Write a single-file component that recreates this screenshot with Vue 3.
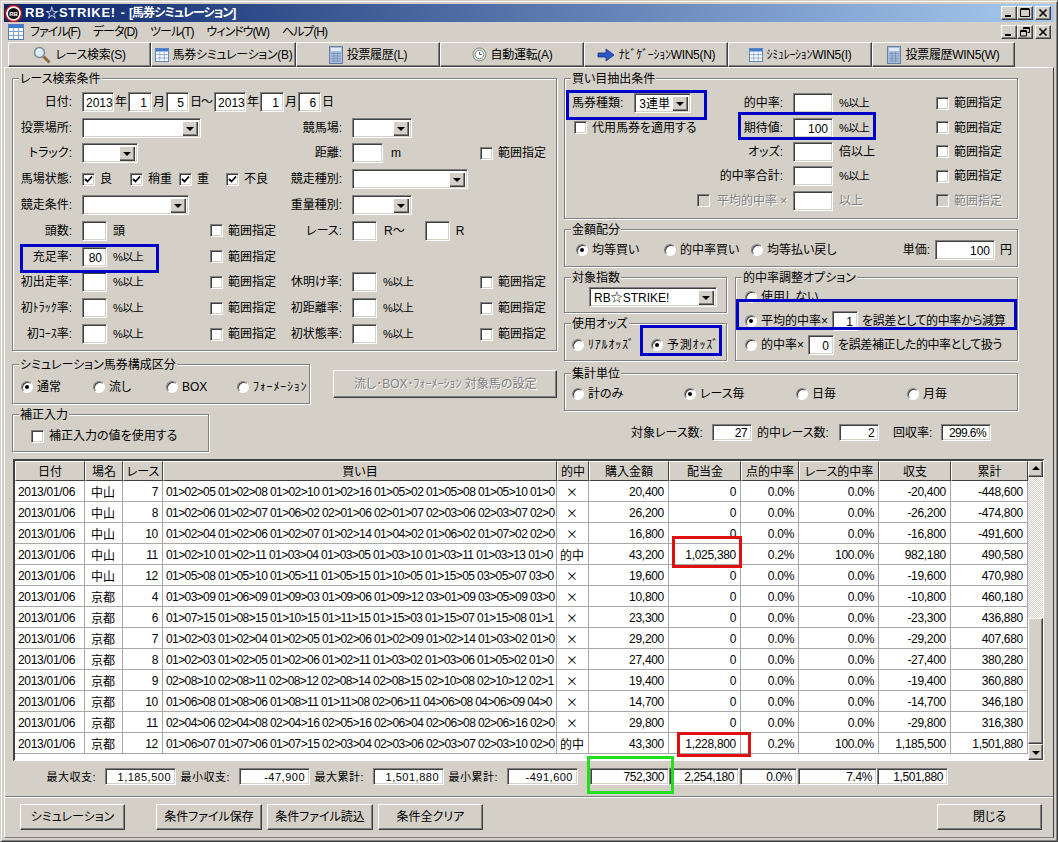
<script setup>
const tabs = [
  { icon: 'search', text: 'レース検索(S)', cls: 'w143' },
  { icon: 'grid', text: '馬券シミュレーション(B)', cls: 'w145' },
  { icon: 'sheet', text: '投票履歴(L)', cls: 'w144' },
  { icon: 'clock', text: '自動運転(A)', cls: 'w144' },
  { icon: 'arrow', text: 'ﾅﾋﾞｹﾞｰｼｮﾝWIN5(N)', cls: 'w144' },
  { icon: 'grid', text: 'ｼﾐｭﾚｰｼｮﾝWIN5(I)', cls: 'w144' },
  { icon: 'sheet', text: '投票履歴WIN5(W)', cls: 'w143' }
]
const menus = ['ファイル(F)', 'データ(D)', 'ツール(T)', 'ウィンドウ(W)', 'ヘルプ(H)']
const rateRows = [
  ['初出走率:', '休明け率:'],
  ['初ﾄﾗｯｸ率:', '初距離率:'],
  ['初ｺｰｽ率:', '初状態率:']
]
const cols = [
  { name: '日付', cls: 'c-date' }, { name: '場名', cls: 'c-place' }, { name: 'レース', cls: 'c-race' },
  { name: '買い目', cls: 'c-buy' }, { name: '的中', cls: 'c-hit' }, { name: '購入金額', cls: 'c-n80' },
  { name: '配当金', cls: 'c-n72' }, { name: '点的中率', cls: 'c-n58' }, { name: 'レース的中率', cls: 'c-n80' },
  { name: '収支', cls: 'c-n72' }, { name: '累計', cls: 'c-n77' }
]
const rows = [
  ['中山', 7, '01>02>05 01>02>08 01>02>10 01>02>16 01>05>02 01>05>08 01>05>10 01>0', '×', '20,400', '0', '0.0%', '0.0%', '-20,400', '-448,600'],
  ['中山', 8, '01>02>06 01>02>07 01>06>02 02>01>06 02>01>07 02>03>06 02>03>07 02>0', '×', '26,200', '0', '0.0%', '0.0%', '-26,200', '-474,800'],
  ['中山', 10, '01>02>04 01>02>06 01>02>07 01>02>14 01>04>02 01>06>02 01>07>02 02>0', '×', '16,800', '0', '0.0%', '0.0%', '-16,800', '-491,600'],
  ['中山', 11, '01>02>10 01>02>11 01>03>04 01>03>05 01>03>10 01>03>11 01>03>13 01>0', '的中', '43,200', '1,025,380', '0.2%', '100.0%', '982,180', '490,580'],
  ['中山', 12, '01>05>08 01>05>10 01>05>11 01>05>15 01>10>05 01>15>05 03>05>07 03>0', '×', '19,600', '0', '0.0%', '0.0%', '-19,600', '470,980'],
  ['京都', 4, '01>03>09 01>06>09 01>09>03 01>09>06 01>09>12 03>01>09 03>05>09 03>0', '×', '10,800', '0', '0.0%', '0.0%', '-10,800', '460,180'],
  ['京都', 6, '01>07>15 01>08>15 01>10>15 01>11>15 01>15>03 01>15>07 01>15>08 01>1', '×', '23,300', '0', '0.0%', '0.0%', '-23,300', '436,880'],
  ['京都', 7, '01>02>03 01>02>04 01>02>05 01>02>06 01>02>09 01>02>14 01>03>02 01>0', '×', '29,200', '0', '0.0%', '0.0%', '-29,200', '407,680'],
  ['京都', 8, '01>02>03 01>02>05 01>02>06 01>02>11 01>03>02 01>03>06 01>05>02 01>0', '×', '27,400', '0', '0.0%', '0.0%', '-27,400', '380,280'],
  ['京都', 9, '02>08>10 02>08>11 02>08>12 02>08>14 02>08>15 02>10>08 02>10>12 02>1', '×', '19,400', '0', '0.0%', '0.0%', '-19,400', '360,880'],
  ['京都', 10, '01>06>08 01>08>06 01>08>11 01>11>08 02>06>11 04>06>08 04>06>09 04>0', '×', '14,700', '0', '0.0%', '0.0%', '-14,700', '346,180'],
  ['京都', 11, '02>04>06 02>04>08 02>04>16 02>05>16 02>06>04 02>06>08 02>06>16 02>0', '×', '29,800', '0', '0.0%', '0.0%', '-29,800', '316,380'],
  ['京都', 12, '01>06>07 01>07>06 01>07>15 02>03>04 02>03>06 02>03>07 02>03>10 02>0', '的中', '43,300', '1,228,800', '0.2%', '100.0%', '1,185,500', '1,501,880']
]
const buyRows = [
  { label: '的中率:', val: '', suf: '%以上', cls: 'pct' },
  { label: '期待値:', val: '100', suf: '%以上', cls: 'pct' },
  { label: 'オッズ:', val: '', suf: '倍以上', cls: '' },
  { label: '的中率合計:', val: '', suf: '%以上', cls: 'pct' }
]
const summary = [
  ['最大収支:', '1,185,500'], ['最小収支:', '-47,900'], ['最大累計:', '1,501,880'], ['最小累計:', '-491,600']
]
</script>

<template>
  <div class="app">
    <svg class="defs" width="0" height="0">
      <defs>
        <symbol id="i-grid" viewBox="0 0 16 16">
          <rect x="0.5" y="0.5" width="15" height="15" fill="#fff" stroke="#4f7cc0" />
          <rect x="1" y="1" width="14" height="3" fill="#3f78d0" />
          <path d="M1 7.5h14M1 11.5h14M5.5 4v11M10.5 4v11" stroke="#7fa3d8" fill="none" />
        </symbol>
        <symbol id="i-search" viewBox="0 0 18 18">
          <path d="M10.5 10.5l6 6" stroke="#8a6a3a" stroke-width="3" fill="none" />
          <circle cx="6.5" cy="6.5" r="5" fill="#d8ecfa" stroke="#7a8a9a" stroke-width="1.5" />
          <path d="M4 6a3 3 0 0 1 3-2.5" stroke="#fff" fill="none" />
        </symbol>
        <symbol id="i-sheet" viewBox="0 0 14 18">
          <rect x="0.5" y="0.5" width="13" height="17" fill="#a8bcdc" stroke="#6a7f9f" />
          <rect x="2" y="2" width="10" height="3" fill="#dfe8f5" />
          <path d="M2.5 7.5h9M2.5 10h9M2.5 12.5h9M2.5 15h9M5 6.5v10M8.5 6.5v10" stroke="#5f78a8" stroke-dasharray="1 1" fill="none" />
        </symbol>
        <symbol id="i-clock" viewBox="0 0 16 16">
          <circle cx="8" cy="8" r="7" fill="#d8d8c8" stroke="#8a8a80" />
          <circle cx="8" cy="8" r="4.5" fill="#fff" stroke="#6f8fb8" />
          <path d="M8 5v3h2.5" stroke="#555" fill="none" />
        </symbol>
        <symbol id="i-arrow" viewBox="0 0 18 14">
          <path d="M1 5h8V1l8 6-8 6V9H1z" fill="#2a55c8" stroke="#16307f" stroke-width="0.8" />
        </symbol>
      </defs>
    </svg>

    <div class="window">
      <header class="title">
        <svg class="logo" width="17" height="17" viewBox="0 0 17 17">
          <circle cx="8.5" cy="8.5" r="8" fill="#fff" stroke="#c01010" stroke-width="1.5" />
          <circle cx="8.5" cy="8.5" r="5.6" fill="#111" />
          <text x="8.5" y="10.5" text-anchor="middle" font-size="6" font-weight="700" fill="#fff" font-family="Liberation Sans">RB</text>
        </svg>
        <span class="title-a">RB☆STRIKE!</span><span class="title-b">- [馬券シミュレーション]</span>
        <div class="wbtns">
          <span class="wb"><svg width="14" height="12"><rect x="3" y="8" width="6" height="2" fill="#000" /></svg></span>
          <span class="wb"><svg width="14" height="12"><path d="M2.5 2.5h9v7h-9z M2.5 1.5h9" fill="none" stroke="#000" /></svg></span>
          <span class="wb wb-gap"><svg width="14" height="12"><path d="M3.5 2.5l7 7M10.5 2.5l-7 7" stroke="#000" stroke-width="1.6" /></svg></span>
        </div>
      </header>

      <nav class="menu">
        <svg class="menu-icon" width="16" height="16"><use href="#i-grid" /></svg>
        <span v-for="m in menus" :key="m" class="menu-item">{{ m }}</span>
        <div class="wbtns">
          <span class="wb"><svg width="14" height="12"><rect x="3" y="8" width="6" height="2" fill="#000" /></svg></span>
          <span class="wb"><svg width="14" height="12"><path d="M5.5 3.5v-2h6v5h-2M5.5 2.5h6M2.5 4.5h6v5.500h-6zM2.500 5.500h6" fill="none" stroke="#000" /></svg></span>
          <span class="wb wb-gap"><svg width="14" height="12"><path d="M3.500 2.500l7 7M10.500 2.500l-7 7" stroke="#000" stroke-width="1.600" /></svg></span>
        </div>
      </nav>

      <div class="tabs">
        <div v-for="t in tabs" :key="t.text" class="tab raised" :class="t.cls">
          <svg v-if="t.icon === 'search'" width="18" height="18"><use href="#i-search" /></svg>
          <svg v-else-if="t.icon === 'grid'" width="14" height="14"><use href="#i-grid" /></svg>
          <svg v-else-if="t.icon === 'sheet'" width="14" height="18"><use href="#i-sheet" /></svg>
          <svg v-else-if="t.icon === 'clock'" width="15" height="15"><use href="#i-clock" /></svg>
          <svg v-else width="18" height="14"><use href="#i-arrow" /></svg>
          <span>{{ t.text }}</span>
        </div>
      </div>

      <main class="child">
        <div class="top">
          <div class="col-left">
            <section class="group g-race">
              <span class="legend">レース検索条件</span>
              <div class="race-grid">
                <span class="lab">日付:</span>
                <div class="span5 date">
                  <span class="tb w32 r">2013</span><span class="u">年</span>
                  <span class="tb w24 r">1</span><span class="u">月</span>
                  <span class="tb w23 r">5</span><span class="u wave">日～</span>
                  <span class="tb w32 r">2013</span><span class="u">年</span>
                  <span class="tb w24 r">1</span><span class="u">月</span>
                  <span class="tb w23 r">6</span><span class="u">日</span>
                </div>

                <span class="lab">投票場所:</span>
                <span class="cb w119"><i class="drop"></i></span><span></span>
                <span class="lab">競馬場:</span>
                <span class="cb w60"><i class="drop"></i></span><span></span>

                <span class="lab">トラック:</span>
                <span class="cb w56"><i class="drop"></i></span><span></span>
                <span class="lab">距離:</span>
                <div class="f"><span class="tb w31"></span><span class="m">m</span></div>
                <label class="chk"><i class="box"></i>範囲指定</label>

                <span class="lab">馬場状態:</span>
                <div class="span2 baba">
                  <label class="chk w48"><i class="box on"><svg width="9" height="9" viewBox="0 0 9 9"><path d="M1 4l2.500 2.500L8 1.500" fill="none" stroke="#000" stroke-width="1.800" /></svg></i>良</label>
                  <label class="chk w49"><i class="box on"><svg width="9" height="9" viewBox="0 0 9 9"><path d="M1 4l2.500 2.500L8 1.500" fill="none" stroke="#000" stroke-width="1.800" /></svg></i>稍重</label>
                  <label class="chk w47"><i class="box on"><svg width="9" height="9" viewBox="0 0 9 9"><path d="M1 4l2.500 2.500L8 1.500" fill="none" stroke="#000" stroke-width="1.800" /></svg></i>重</label>
                  <label class="chk"><i class="box on"><svg width="9" height="9" viewBox="0 0 9 9"><path d="M1 4l2.500 2.500L8 1.500" fill="none" stroke="#000" stroke-width="1.800" /></svg></i>不良</label>
                </div>
                <span class="lab">競走種別:</span>
                <span class="cb w116"><i class="drop"></i></span><span></span>

                <span class="lab">競走条件:</span>
                <span class="cb w107"><i class="drop"></i></span><span></span>
                <span class="lab">重量種別:</span>
                <span class="cb w60"><i class="drop"></i></span><span></span>

                <span class="lab">頭数:</span>
                <div class="f"><span class="tb w25"></span><span class="suf">頭</span></div>
                <label class="chk"><i class="box"></i>範囲指定</label>
                <span class="lab">レース:</span>
                <div class="f"><span class="tb w25"></span><span class="rr">R～</span><span class="tb w25"></span><span class="suf">R</span></div>
                <span></span>

                <span class="lab">充足率:</span>
                <div class="f"><span class="tb w25 r">80</span><span class="suf pct">%以上</span></div>
                <label class="chk"><i class="box"></i>範囲指定</label>
                <span></span><span></span><span></span>

                <template v-for="r in rateRows" :key="r[0]">
                  <span class="lab">{{ r[0] }}</span>
                  <div class="f"><span class="tb w25"></span><span class="suf pct">%以上</span></div>
                  <label class="chk"><i class="box"></i>範囲指定</label>
                  <span class="lab">{{ r[1] }}</span>
                  <div class="f"><span class="tb w25"></span><span class="suf pct">%以上</span></div>
                  <label class="chk"><i class="box"></i>範囲指定</label>
                </template>
              </div>
            </section>

            <div class="sim-row">
              <section class="group g-sim">
                <span class="legend">シミュレーション馬券構成区分</span>
                <label class="rad w72"><i class="dot on"></i>通常</label>
                <label class="rad w73"><i class="dot"></i>流し</label>
                <label class="rad w71"><i class="dot"></i>BOX</label>
                <label class="rad"><i class="dot"></i><span class="hk">ﾌｫｰﾒｰｼｮﾝ</span></label>
              </section>
              <div class="btn raised dis-btn"><span class="dis">流し･BOX･ﾌｫｰﾒｰｼｮﾝ 対象馬の設定</span></div>
            </div>

            <section class="group g-adj">
              <span class="legend">補正入力</span>
              <label class="chk"><i class="box"></i>補正入力の値を使用する</label>
            </section>
          </div>

          <div class="col-right">
            <section class="group g-buy">
              <span class="legend">買い目抽出条件</span>
              <div class="buy-grid">
                <div class="f g11"><span>馬券種類:</span><span class="cb w57 val">3連単<i class="drop"></i></span></div>
                <template v-for="(b, i) in buyRows" :key="b.label">
                  <label v-if="i === 1" class="chk buy-alt"><i class="box"></i>代用馬券を適用する</label>
                  <span v-if="i > 1"></span>
                  <span class="lab">{{ b.label }}</span>
                  <span class="tb w40 r">{{ b.val }}</span>
                  <span class="suf" :class="b.cls">{{ b.suf }}</span>
                  <label class="chk"><i class="box"></i>範囲指定</label>
                </template>
                <span></span>
                <label class="chk dis avg"><i class="box off"></i>平均的中率 ×</label>
                <span class="tb w40"></span>
                <span class="suf dis">以上</span>
                <label class="chk dis"><i class="box off"></i>範囲指定</label>
              </div>
            </section>

            <section class="group g-amount">
              <span class="legend">金額配分</span>
              <label class="rad w88"><i class="dot on"></i>均等買い</label>
              <label class="rad w87"><i class="dot"></i>的中率買い</label>
              <label class="rad"><i class="dot"></i>均等払い戻し</label>
              <div class="unit"><span>単価:</span><span class="tb w60 r">100</span><span>円</span></div>
            </section>

            <div class="mid">
              <div class="mid-left">
                <section class="group g-index">
                  <span class="legend">対象指数</span>
                  <span class="cb w128 val">RB☆STRIKE!<i class="drop"></i></span>
                </section>
                <section class="group g-odds">
                  <span class="legend">使用オッズ</span>
                  <label class="rad w79"><i class="dot"></i><span class="hk">ﾘｱﾙｵｯｽﾞ</span></label>
                  <label class="rad"><i class="dot on"></i><span class="hk">予測ｵｯｽﾞ</span></label>
                </section>
              </div>
              <section class="group g-opt">
                <span class="legend">的中率調整オプション</span>
                <label class="rad"><i class="dot"></i>使用しない</label>
                <label class="rad"><i class="dot on"></i>平均的中率×<span class="tb w26 r">1</span><span class="tight">を誤差として的中率から減算</span></label>
                <label class="rad"><i class="dot"></i>的中率×<span class="tb w26 r">0</span><span class="tight">を誤差補正した的中率として扱う</span></label>
              </section>
            </div>

            <section class="group g-unit">
              <span class="legend">集計単位</span>
              <label class="rad w112"><i class="dot"></i>計のみ</label>
              <label class="rad w112"><i class="dot on"></i>レース毎</label>
              <label class="rad w111"><i class="dot"></i>日毎</label>
              <label class="rad"><i class="dot"></i>月毎</label>
            </section>

            <div class="totals">
              <span class="t81">対象レース数:</span><span class="tb w40 r sm">27</span>
              <span class="t82">的中レース数:</span><span class="tb w40 r sm">2</span>
              <span class="t48">回収率:</span><span class="tb w50 r sm">299.6%</span>
            </div>
          </div>
        </div>

        <div class="grid-frame">
          <div class="grid-body">
            <table class="tbl">
              <colgroup><col v-for="c in cols" :key="c.name + c.cls" :class="c.cls" /></colgroup>
              <thead><tr><th v-for="c in cols" :key="c.name">{{ c.name }}</th></tr></thead>
              <tbody>
                <tr v-for="r in rows" :key="r[0] + r[1]">
                  <td class="l d">2013/01/06</td>
                  <td class="c cjk">{{ r[0] }}</td>
                  <td class="n">{{ r[1] }}</td>
                  <td class="l buy">{{ r[2] }}</td>
                  <td class="c cjk">{{ r[3] }}</td>
                  <td v-for="i in [4, 5, 6, 7, 8, 9]" :key="i" class="n">{{ r[i] }}</td>
                </tr>
              </tbody>
            </table>
          </div>
          <div class="sbar">
            <span class="sb-btn raised"><i class="up"></i></span>
            <span class="sb-track"></span>
            <span class="sb-thumb raised"></span>
            <span class="sb-btn raised"><i class="down"></i></span>
          </div>
        </div>

        <div class="summary">
          <template v-for="(s, i) in summary" :key="s[0]">
            <span class="sum-lab" :class="{ first: i === 0 }">{{ s[0] }}</span>
            <span class="tb sum-val r">{{ s[1] }}</span>
          </template>
          <span class="tb s79 r num ml12">752,300</span>
          <span class="tb s70 r num">2,254,180</span>
          <span class="tb s57 r num">0.0%</span>
          <span class="tb s79 r num">7.4%</span>
          <span class="tb s71 r num">1,501,880</span>
        </div>

        <div class="divider"></div>

        <div class="actions">
          <div class="btn raised a105">シミュレーション</div>
          <div class="btn raised a106 ml26">条件ファイル保存</div>
          <div class="btn raised a106">条件ファイル読込</div>
          <div class="btn raised a105">条件全クリア</div>
          <div class="btn raised a105 close">閉じる</div>
        </div>
      </main>
    </div>

    <span class="mark blue b1"></span>
    <span class="mark blue b2"></span>
    <span class="mark blue b3"></span>
    <span class="mark blue b4"></span>
    <span class="mark blue b5"></span>
    <span class="mark red r1"></span>
    <span class="mark red r2"></span>
    <span class="mark green g1"></span>
  </div>
</template>

<style>
html, body { margin: 0; padding: 0; background: #d4d0c8; }
</style>

<style scoped>
.app {
  position: relative;
  width: 1058px;
  height: 842px;
  overflow: hidden;
  background: #d4d0c8;
  color: #000;
  font: 12px/16px "Liberation Sans", "Noto Sans CJK JP", sans-serif;
  font-feature-settings: "palt";
  white-space: nowrap;
}
.defs { position: absolute; }
.window {
  box-sizing: border-box;
  height: 842px;
  padding: 3px;
  border: 1px solid;
  border-color: #d4d0c8 #404040 #404040 #d4d0c8;
  box-shadow: inset 1px 1px 0 #fff, inset -1px -1px 0 #808080;
}
.title {
  display: flex;
  align-items: center;
  height: 18px;
  background: linear-gradient(90deg, #0a246a 0%, #a6caf0 100%);
  color: #fff;
  font-weight: 700;
}
.logo { margin: 0 3px 0 1px; flex: none; }
.title-a { font-size: 13px; letter-spacing: 0.7px; margin-right: 5px; }
.title-b { letter-spacing: -1px; word-spacing: 3px; }
.wbtns { display: flex; margin-left: auto; margin-right: 3px; }
.wb {
  box-sizing: border-box;
  display: flex;
  width: 16px;
  height: 14px;
  background: #d4d0c8;
  border: 1px solid;
  border-color: #fff #404040 #404040 #fff;
  box-shadow: inset -1px -1px 0 #808080;
}
.wb-gap { margin-left: 2px; }
.menu { display: flex; align-items: center; height: 19px; }
.menu-icon { margin: 0 6px 0 4px; flex: none; }
.menu-item { margin-right: 13px; letter-spacing: -1px; }
.tabs { display: flex; height: 25px; padding: 1px 0 0 4px; }
.raised {
  box-sizing: border-box;
  background: #d4d0c8;
  border: 1px solid;
  border-color: #fff #404040 #404040 #fff;
  box-shadow: inset -1px -1px 0 #808080;
}
.tab { display: flex; align-items: center; justify-content: center; gap: 4px; height: 25px; letter-spacing: -0.3px; }
.w143 { width: 143px; }
.w145 { width: 145px; }
.w144 { width: 144px; }
.child {
  box-sizing: border-box;
  position: relative;
  height: 771px;
  padding: 11px 0 0 8px;
  border: 1px solid;
  border-color: #fff #404040 #808080 #fff;
}
.top { display: flex; gap: 7px; height: 374px; margin-top: -1px; margin-left: -1px; }
.col-left { width: 545px; }
.col-right { width: 454px; }
.group {
  box-sizing: border-box;
  position: relative;
  border: 1px solid #808080;
  box-shadow: 1px 1px 0 #fff, inset 1px 1px 0 #fff;
}
.legend {
  position: absolute;
  top: -8px;
  left: 6px;
  padding: 0 1px;
  background: #d4d0c8;
}
.g-race { height: 273px; padding: 10px 0 0 7px; }
.race-grid {
  display: grid;
  grid-template-columns: 62px 128px 65px 77px 128px 65px;
  grid-auto-rows: 25.800px;
  align-items: center;
}
.lab { display: flex; justify-content: flex-end; padding-right: 10px; }
.span5 { grid-column: span 5; }
.span2 { grid-column: span 2; }
.f { display: flex; align-items: center; }
.g11 { gap: 11px; }
.tb {
  box-sizing: border-box;
  display: inline-block;
  flex: none;
  height: 20px;
  line-height: 16px;
  background: #fff;
  border: 1px solid;
  border-color: #808080 #fff #fff #808080;
  box-shadow: inset 1px 1px 0 #404040, inset -1px -1px 0 #d4d0c8;
  padding: 2px 4px 0 3px;
}
.tb.r { text-align: right; }
.cb {
  box-sizing: border-box;
  position: relative;
  display: inline-block;
  height: 20px;
  background: #fff;
  border: 1px solid;
  border-color: #808080 #fff #fff #808080;
  box-shadow: inset 1px 1px 0 #404040, inset -1px -1px 0 #d4d0c8;
  padding: 2px 0 0 4px;
  line-height: 16px;
}
.drop {
  position: absolute;
  top: 2px;
  right: 2px;
  width: 16px;
  height: 15px;
  background: #d4d0c8;
  box-shadow: inset 1px 1px 0 #fff, inset -1px -1px 0 #404040, inset -2px -2px 0 #808080;
}
.drop::after {
  content: "";
  position: absolute;
  top: 6px;
  left: 4px;
  border: 4px solid transparent;
  border-top: 4px solid #000;
  border-bottom: 0;
}
.w23 { width: 23px; }
.w24 { width: 24px; }
.w25 { width: 25px; }
.w26 { width: 26px; }
.w31 { width: 31px; }
.w32 { width: 32px; }
.w40 { width: 40px; }
.w50 { width: 50px; }
.w56 { width: 56px; }
.w57 { width: 57px; }
.w60 { width: 60px; }
.w107 { width: 107px; }
.w116 { width: 116px; }
.w119 { width: 119px; }
.w128 { width: 128px; }
.date { display: flex; align-items: center; }
.u { padding: 0 1px; }
.wave { width: 23px; letter-spacing: -1px; }
.ml12 { margin-left: 12px; }
.ml26 { margin-left: 26px; }
.suf { margin-left: 6px; }
.pct { font-size: 11px; letter-spacing: -0.5px; }
.m { margin-left: 8px; }
.rr { margin: 0 20px 0 7px; }
.chk { display: inline-flex; align-items: center; gap: 5px; }
.box {
  box-sizing: border-box;
  display: flex;
  align-items: center;
  justify-content: center;
  width: 13px;
  height: 13px;
  flex: none;
  background: #fff;
  border: 1px solid;
  border-color: #808080 #fff #fff #808080;
  box-shadow: inset 1px 1px 0 #404040, inset -1px -1px 0 #d4d0c8;
}
.box.off { background: #d4d0c8; }
.dis { color: #808080; text-shadow: 1px 1px 0 #fff; }
.baba { display: flex; }
.w48 { width: 48px; }
.w49 { width: 49px; }
.w47 { width: 47px; }
.rad { display: inline-flex; align-items: center; gap: 4px; }
.hk { font-feature-settings: normal; letter-spacing: 0.8px; }
.tight { letter-spacing: -0.4px; }
.dot {
  position: relative;
  box-sizing: border-box;
  width: 12px;
  height: 12px;
  flex: none;
  background: #fff;
  border-radius: 50%;
  border: 1px solid;
  border-color: #808080 #fff #fff #808080;
  box-shadow: inset 1px 1px 0 #404040;
}
.dot.on::after {
  content: "";
  position: absolute;
  top: 3px;
  left: 3px;
  width: 4px;
  height: 4px;
  border-radius: 50%;
  background: #000;
}
.w72 { width: 72px; }
.w73 { width: 73px; }
.w71 { width: 71px; }
.w79 { width: 79px; }
.w87 { width: 87px; }
.w88 { width: 88px; }
.w111 { width: 111px; }
.w112 { width: 112px; }
.sim-row { display: flex; margin-top: 13px; }
.g-sim { display: flex; align-items: center; width: 299px; height: 40px; padding: 6px 0 0 8px; }
.btn { display: flex; align-items: center; justify-content: center; }
.dis-btn { width: 224px; height: 28px; margin: 6px 0 0 23px; }
.g-adj { display: flex; align-items: center; width: 197px; height: 38px; margin-top: 10px; padding: 6px 0 0 18px; }
.g-buy { height: 141px; padding: 12px 0 0 7px; }
.buy-grid {
  display: grid;
  grid-template-columns: 125px 96px 40px 103px 74px;
  grid-auto-rows: 24.400px;
  align-items: center;
}
.buy-alt { padding-left: 2px; }
.avg { gap: 7px; justify-self: start; }
.g-amount { display: flex; align-items: center; height: 38px; margin-top: 10px; padding: 4px 0 0 11px; }
.unit { display: flex; align-items: center; gap: 5px; margin-left: auto; margin-right: 5px; }
.mid { display: flex; gap: 8px; margin-top: 10px; }
.mid-left { width: 163px; }
.g-index { height: 36px; padding: 9px 0 0 24px; }
.g-odds { display: flex; align-items: center; height: 38px; margin-top: 10px; padding: 6px 0 0 7px; }
.g-opt {
  display: flex;
  flex-direction: column;
  justify-content: center;
  gap: 4px;
  width: 283px;
  height: 84px;
  padding: 4px 0 0 9px;
}
.g-opt .rad { height: 20px; }
.g-unit { display: flex; align-items: center; height: 38px; margin-top: 12px; padding: 4px 0 0 7px; }
.totals { display: flex; align-items: center; height: 17px; margin-top: 13px; padding-left: 67px; }
.t81 { width: 81px; }
.t82 { width: 82px; margin-left: 5px; }
.t48 { width: 48px; margin-left: 14px; }
.tb.sm { height: 17px; padding-top: 1px; line-height: 15px; letter-spacing: -0.6px; }

.grid-frame {
  box-sizing: border-box;
  display: flex;
  width: 1031px;
  height: 302px;
  margin: 7px 0 0 0;
  border: 1px solid #fff;
  border-width: 2px 1px 1px 2px;
  border-color: #404040 #fff #fff #404040;
}
.grid-body { width: 1013px; background: #fff; }
.tbl {
  table-layout: fixed;
  width: 1013px;
  border-collapse: separate;
  border-spacing: 0;
}
.c-date { width: 70px; }
.c-place { width: 38px; }
.c-race { width: 40px; }
.c-buy { width: 394px; }
.c-hit { width: 32px; }
.c-n80 { width: 80px; }
.c-n72 { width: 72px; }
.c-n58 { width: 58px; }
.c-n77 { width: 77px; }
.tbl th {
  box-sizing: border-box;
  height: 20px;
  padding: 1px 0 0;
  font-weight: 400;
  background: #d4d0c8;
  border: 1px solid;
  border-color: #fff #404040 #404040 #fff;
  overflow: hidden;
}
.tbl td {
  box-sizing: border-box;
  height: 21px;
  padding: 1px 4px 0 3px;
  border-right: 1px solid #a8a8a8;
  border-bottom: 1px solid #a8a8a8;
  overflow: hidden;
}
.tbl td.l { text-align: left; letter-spacing: -0.6px; }
.tbl td.d { letter-spacing: -0.3px; }
.tbl td.n { text-align: right; letter-spacing: -0.3px; }
.tbl td.c { text-align: center; }
.tbl td.buy { padding-right: 0; }
.cjk { font-family: "Noto Sans CJK JP", sans-serif; }
.sbar { display: flex; flex-direction: column; width: 15px; }
.sb-btn { position: relative; height: 16px; flex: none; }
.up, .down {
  position: absolute;
  left: 3px;
  border: 4px solid transparent;
}
.up { top: 4px; border-bottom: 4px solid #000; border-top: 0; }
.down { top: 6px; border-top: 4px solid #000; border-bottom: 0; }
.sb-track {
  height: 141px;
  flex: none;
  background: repeating-conic-gradient(#fff 0 25%, #d4d0c8 0 50%) 0 0 / 2px 2px;
}
.sb-thumb { flex: 1; }

.summary { display: flex; align-items: center; height: 17px; margin-top: 7px; }
.sum-lab {
  box-sizing: border-box;
  display: flex;
  justify-content: flex-end;
  width: 63px;
  padding-right: 9px;
  font-size: 11px;
  letter-spacing: 0.5px;
}
.sum-lab.first { width: 92px; }
.sum-val { width: 71px; font-size: 11px; letter-spacing: 0.5px; }
.summary .tb { height: 17px; padding-top: 1px; line-height: 15px; }
.s79 { width: 79px; margin-left: 1px; }
.s79.ml12 { margin-left: 12px; }
.s70 { width: 70px; }
.s57 { width: 57px; margin-left: 1px; }
.s71 { width: 71px; }
.num { letter-spacing: -0.4px; }
.divider {
  height: 0;
  margin: 11px 0 0 -8px;
  border-top: 1px solid #808080;
  border-bottom: 1px solid #fff;
}
.actions { display: flex; gap: 5px; margin-top: 6px; padding-left: 7px; }
.a105 { width: 105px; height: 26px; }
.a106 { width: 106px; height: 26px; }
.close { margin-left: auto; margin-right: 11px; }

.mark { position: absolute; box-sizing: border-box; pointer-events: none; }
.blue { border: 3px solid #0000c8; }
.red { border: 3px solid #e01010; }
.green { border: 3px solid #20e020; }
.b1 { left: 20px; top: 244px; width: 139px; height: 29px; }
.b2 { left: 566px; top: 90px; width: 141px; height: 30px; }
.b3 { left: 738px; top: 112px; width: 138px; height: 28px; }
.b4 { left: 640px; top: 325px; width: 82px; height: 31px; }
.b5 { left: 736px; top: 299px; width: 281px; height: 31px; }
.r1 { left: 672px; top: 536px; width: 70px; height: 32px; }
.r2 { left: 677px; top: 732px; width: 74px; height: 25px; }
.g1 { left: 587px; top: 756px; width: 87px; height: 38px; }
</style>
